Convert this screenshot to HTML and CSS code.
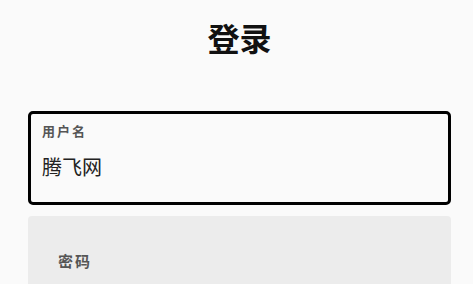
FILE: index.html
```html
<!DOCTYPE html>
<html lang="zh">
<head>
<meta charset="utf-8">
<title>登录</title>
<link rel="stylesheet" href="styles.css">
</head>
<body>
<main class="login">
  <h1 class="title">登录</h1>
  <div class="field field-active">
    <label class="field-label">用户名</label>
    <div class="field-value">腾飞网</div>
  </div>
  <div class="field field-idle">
    <label class="field-label-idle">密码</label>
  </div>
</main>
</body>
</html>
```

FILE: styles.css
```css
html, body {
  margin: 0;
  padding: 0;
  background: #fafafa;
}
body {
  font-family: "Noto Sans CJK SC", "Noto Sans", sans-serif;
  color: #222;
}
.login {
  width: 423px;
  margin-left: 28px;
  display: flex;
  flex-direction: column;
}
.title {
  margin: 0;
  padding-top: 14px;
  height: 111px;
  box-sizing: border-box;
  text-align: center;
  font-size: 32px;
  line-height: 46px;
  font-weight: 700;
  color: #111;
}
.field {
  box-sizing: border-box;
  height: 94px;
  border-radius: 5px;
}
.field-active {
  border: 3px solid #000;
  padding: 8px 11px 0;
  display: flex;
  flex-direction: column;
}
.field-label {
  font-size: 13px;
  line-height: 17px;
  font-weight: 700;
  letter-spacing: 2px;
  color: #555;
}
.field-value {
  margin-top: 14px;
  font-size: 20px;
  line-height: 28px;
  color: #222;
}
.field-idle {
  margin-top: 11px;
  background: #ececec;
  border-radius: 4px;
  padding: 35px 30px 0;
}
.field-label-idle {
  display: block;
  font-size: 15px;
  line-height: 20px;
  font-weight: 700;
  letter-spacing: 2px;
  color: #555;
}
```
